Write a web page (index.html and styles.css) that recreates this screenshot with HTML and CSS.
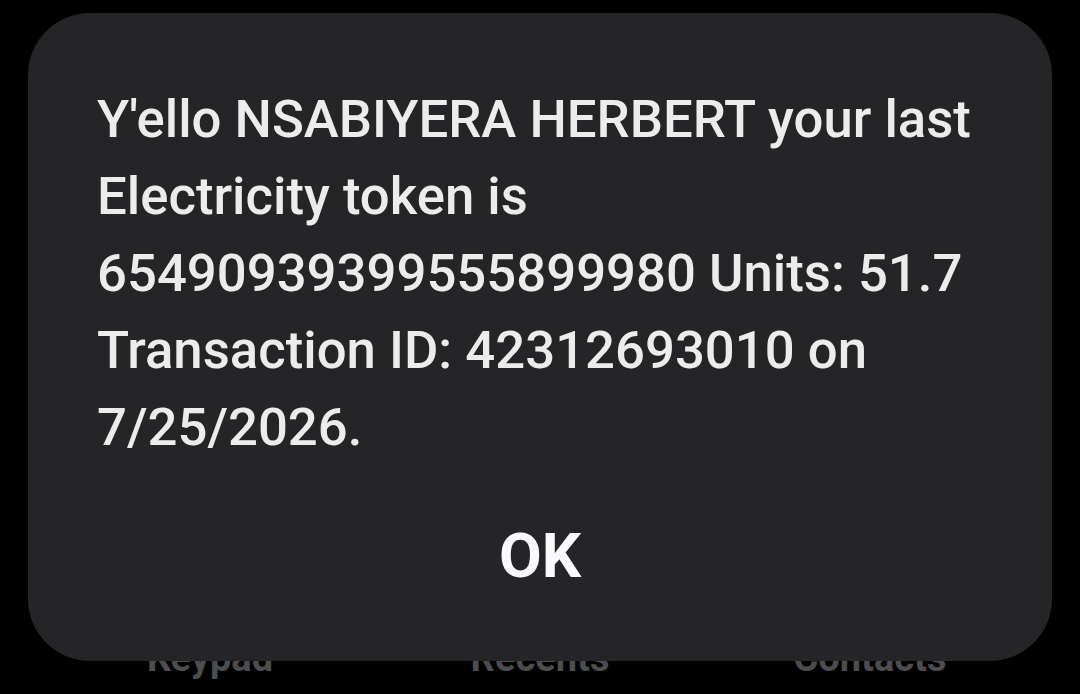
FILE: index.html
```html
<!DOCTYPE html>
<html lang="en">
<head>
<meta charset="utf-8">
<title>USSD</title>
<link rel="stylesheet" href="styles.css">
</head>
<body>
<div class="screen">
  <nav class="tabs">
    <span class="tab">Keypad</span>
    <span class="tab">Recents</span>
    <span class="tab">Contacts</span>
  </nav>
  <div class="dialog">
    <p class="message">Y'ello NSABIYERA HERBERT your last Electricity token is 65490939399555899980 Units: 51.7 Transaction ID: 42312693010 on 7/25/2026.</p>
    <div class="actions"><button class="ok">OK</button></div>
  </div>
</div>
</body>
</html>
```
FILE: styles.css
```css
html, body {
  margin: 0;
  padding: 0;
  background: #000;
}
.screen {
  position: relative;
  width: 1080px;
  height: 694px;
  overflow: hidden;
  background: #000;
  font-family: Roboto, "Noto Sans", sans-serif;
}
.tabs {
  position: absolute;
  left: 0;
  right: 0;
  top: 635px;
  display: grid;
  grid-template-columns: 1fr 1fr 1fr;
  justify-items: center;
  padding: 0 45px;
}
.tab {
  color: #4d4d4f;
  font-weight: 700;
  font-size: 38px;
  line-height: 46px;
}
.dialog {
  position: absolute;
  left: 28px;
  top: 13px;
  width: 1024px;
  height: 648px;
  box-sizing: border-box;
  background: #252527;
  border-radius: 62px;
  padding: 68px 69px 0 69px;
  display: flex;
  flex-direction: column;
}
.message {
  margin: 0 -12px 0 0;
  color: #ececec;
  font-weight: 500;
  font-size: 52.7px;
  line-height: 77px;
}
.actions {
  display: flex;
  justify-content: center;
  margin-top: 52px;
}
.ok {
  background: none;
  border: 0;
  padding: 0;
  color: #fafafc;
  font-family: Roboto, "Noto Sans", sans-serif;
  font-weight: 700;
  font-size: 62px;
  line-height: 76px;
}
```
